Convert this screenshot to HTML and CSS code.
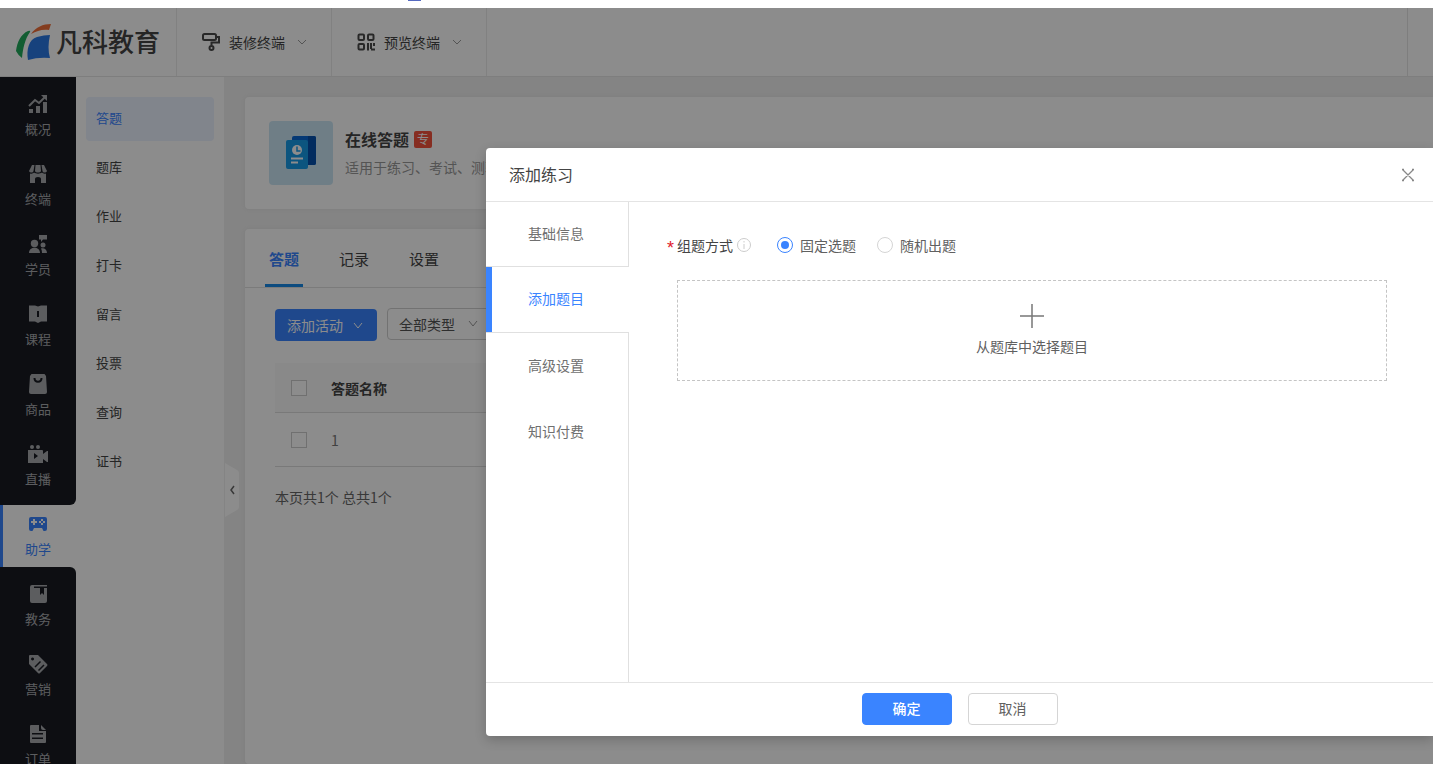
FILE: index.html
```html
<!DOCTYPE html>
<html lang="zh-CN">
<head>
<meta charset="utf-8">
<title>凡科教育</title>
<link rel="stylesheet" href="styles.css">
</head>
<body>
<div class="strip"><span class="strip-mark"></span></div>
<div class="app">
  <header class="topbar">
    <a class="logo" href="#">
      <svg width="36" height="38" viewBox="0 0 36 38" aria-hidden="true">
        <path d="M0 28C1 19 5 11 12 8Q15 7 14 9C9 16 7 25 6 35Q2 32 0 28Z" fill="#22a95b"/>
        <path d="M15 11C20 4 27 1 35 1L33 7C26 6 21 8 15 11Z" fill="#f0703a"/>
        <path d="M12 37C10 27 13 16 21 14Q28 12 34 12Q31 25 34 35Q22 34 12 37Z" fill="#2a78e4"/>
      </svg>
      <span>凡科教育</span>
    </a>
    <button class="top-item" type="button">
      <svg width="18" height="18" viewBox="0 0 18 18" fill="none" stroke="#4a4a4a" stroke-width="2" aria-hidden="true"><rect x="1" y="1" width="13" height="6" rx="1.500"/><path d="M14 4h3v5.500H9.500v3"/><circle cx="9.500" cy="15" r="2"/></svg>
      <span>装修终端</span>
      <svg class="chev" width="10" height="10" viewBox="0 0 10 10" aria-hidden="true"><path d="M1 3l4 4 4-4"/></svg>
    </button>
    <button class="top-item" type="button">
      <svg width="18" height="18" viewBox="0 0 18 18" fill="none" stroke="#4a4a4a" stroke-width="2" aria-hidden="true"><rect x="1.500" y="1.500" width="5.500" height="5.500" rx="1"/><rect x="11" y="1.500" width="5.500" height="5.500" rx="1"/><rect x="1.500" y="11" width="5.500" height="5.500" rx="1"/><path d="M11 10v7.500M14 10v6M17 10v3M14 16.500h4"/></svg>
      <span>预览终端</span>
      <svg class="chev" width="10" height="10" viewBox="0 0 10 10" aria-hidden="true"><path d="M1 3l4 4 4-4"/></svg>
    </button>
    <div class="top-end"></div>
  </header>
  <div class="body">
    <nav class="rail" aria-label="主导航">
      <div class="rail-group rail-first">
        <a class="rail-item" href="#"><svg viewBox="0 0 20 20"><path d="M1 15h4v4H1zM8 12h4v7H8zM15 8h4v11h-4z"/><path d="M1 12l6-6 4 3 6-6" fill="none" stroke="currentColor" stroke-width="2"/><path d="M13 1h6v6z"/></svg>概况</a>
        <a class="rail-item" href="#"><svg viewBox="0 0 20 20"><path d="M4 1h2.500L5.500 7C5 9 2 9 1 7zM7.500 1h5l.5 6c-.5 2-5.500 2-6 0zM13.500 1H16l3 6c-1 2-4 2-4.500 0z"/><path d="M2 9.500c2 .5 3 0 4-1 2 1.500 6 1.500 8 0 1 1 2 1.500 4 1V19h-5v-4q0-2-3-2t-3 2v4H2z"/></svg>终端</a>
        <a class="rail-item" href="#"><svg viewBox="0 0 20 20"><circle cx="6.500" cy="9.500" r="3.700"/><path d="M1 19c0-7 11-7 11 0zM11 1h8v4.500h-4L13 8V5.500h-2z"/><circle cx="15" cy="11" r="2.500"/><path d="M13 14.500c3-1 6 1 6 4.500h-5q0-3-1-4.500z"/></svg>学员</a>
        <a class="rail-item" href="#"><svg viewBox="0 0 20 20"><path fill-rule="evenodd" d="M1 1.500h6l3 1 3-1h6v16h-6l-3 1.500-3-1.500H1zM9 7v6h2V7z"/></svg>课程</a>
        <a class="rail-item" href="#"><svg viewBox="0 0 20 20"><path d="M3.500 0h13L18 2l1 16q0 2-2 2H3q-2 0-2-2L2 2z"/><path d="M6.500 4c0 5 7 5 7 0" fill="none" stroke="#181b22" stroke-width="2"/></svg>商品</a>
        <a class="rail-item" href="#"><svg viewBox="0 0 20 20"><circle cx="4" cy="3" r="2"/><circle cx="10" cy="3" r="2"/><path fill-rule="evenodd" d="M0 6h14q1 0 1 1v3l4-3h1v11h-1l-4-3v4H0zM6 9v6l4-3z"/></svg>直播</a>
      </div>
      <a class="rail-item active" href="#"><svg viewBox="0 0 20 20"><path fill-rule="evenodd" d="M3 3h14q2 0 2 2v10q0 2-2 2h-1q-1 0-1-1l-1-2H6l-1 2q0 1-1 1H3q-2 0-2-2V5q0-2 2-2zM5 5v2H3v2h2v2h2V9h2V7H7V5zM13 5v2h2V5zM13 9v2h2V9zM11 7v2h2V7zM15 7v2h2V7z"/></svg>助学</a>
      <div class="rail-group rail-last">
        <a class="rail-item" href="#"><svg viewBox="0 0 20 20"><path fill-rule="evenodd" d="M4 1h15v1.500H6V4h6v7l2-2 2 2V4h3v13q0 2-2 2H4q-2 0-2-2V3q0-2 2-2z"/></svg>教务</a>
        <a class="rail-item" href="#"><svg viewBox="0 0 20 20"><path fill-rule="evenodd" d="M2 1h8l9 9q1 1 0 2l-7 7q-1 1-2 0l-9-9V2q0-1 1-1zM4.500 3.500a1.500 1.500 0 1 0 .1 0z"/><path d="M7 13l5.500-5.500M10.500 16.500l5.500-5.500" stroke="#181b22" stroke-width="1.500"/></svg>营销</a>
        <a class="rail-item" href="#"><svg viewBox="0 0 20 20"><path fill-rule="evenodd" d="M3 1h8v6h7v11q0 1-1 1H3q-1 0-1-1V2q0-1 1-1zM4 9v1.500h11V9zM4 13.500V15h11v-1.500z"/><path d="M13 1l5 5h-3q-2 0-2-2z"/></svg>订单</a>
      </div>
    </nav>
    <nav class="submenu" aria-label="助学">
      <a class="sub-item active" href="#">答题</a>
      <a class="sub-item" href="#">题库</a>
      <a class="sub-item" href="#">作业</a>
      <a class="sub-item" href="#">打卡</a>
      <a class="sub-item" href="#">留言</a>
      <a class="sub-item" href="#">投票</a>
      <a class="sub-item" href="#">查询</a>
      <a class="sub-item" href="#">证书</a>
      <button class="collapse" type="button" aria-label="收起菜单"><svg width="14" height="54" viewBox="0 0 14 54"><path d="M0 0l12 7q2 1 2 3v34q0 2-2 3L0 54z" fill="#fff"/><path d="M9 23l-3 4 3 4" fill="none" stroke="#666" stroke-width="1.500"/></svg></button>
    </nav>
    <main class="content">
      <section class="card intro">
        <div class="intro-icon">
          <svg width="32" height="34" viewBox="0 0 32 34" aria-hidden="true"><rect x="7" y="0" width="24" height="29" rx="2" fill="#0868d6"/><path d="M23 0h6q2 0 2 2v25q0 2-2 2h-6z" fill="#0550ae"/><rect x="1" y="4" width="22" height="29" rx="2" fill="#169be8"/><circle cx="12" cy="14" r="5" fill="#fff"/><path d="M12 10.500V15h3.500" fill="none" stroke="#169be8" stroke-width="1.500"/><path d="M6 22.500h12M6 26.500h7" stroke="#fff" stroke-width="2"/></svg>
        </div>
        <div class="intro-text">
          <h1>在线答题<span class="badge">专</span></h1>
          <p>适用于练习、考试、测验</p>
        </div>
      </section>
      <section class="card list">
        <nav class="tabs" aria-label="答题管理">
          <a class="tab active" href="#">答题</a>
          <a class="tab" href="#">记录</a>
          <a class="tab" href="#">设置</a>
        </nav>
        <div class="panel">
          <div class="tools">
            <button class="add" type="button">添加活动<svg class="chev" width="10" height="10" viewBox="0 0 10 10" aria-hidden="true"><path d="M1 3l4 5 4-5"/></svg></button>
            <div class="select-wrap">
              <select aria-label="类型"><option>全部类型</option></select>
              <svg class="chev" width="10" height="10" viewBox="0 0 10 10" aria-hidden="true"><path d="M1 2l4 5 4-5"/></svg>
            </div>
          </div>
          <table>
            <thead><tr><th class="pick"><input type="checkbox" aria-label="全选"></th><th>答题名称</th></tr></thead>
            <tbody><tr><td class="pick"><input type="checkbox" aria-label="选择 1"></td><td>1</td></tr></tbody>
          </table>
          <p class="count">本页共1个 总共1个</p>
        </div>
      </section>
    </main>
  </div>
  <div class="overlay">
    <section class="dialog" role="dialog" aria-modal="true" aria-labelledby="dlg-title">
      <header class="dlg-head">
        <h2 id="dlg-title">添加练习</h2>
        <button class="close" type="button" aria-label="关闭"><svg width="14" height="14" viewBox="0 0 14 14"><path d="M1.500 1.500l11 11M12.500 1.500l-11 11M1 1.500h2M11 1.500h2M1 12.500h2M11 12.500h2"/></svg></button>
      </header>
      <div class="dlg-main">
        <nav class="steps" aria-label="步骤">
          <a class="step" href="#">基础信息</a>
          <a class="step active" href="#">添加题目</a>
          <a class="step" href="#">高级设置</a>
          <a class="step" href="#">知识付费</a>
          <div class="steps-rest"></div>
        </nav>
        <form class="form">
          <div class="row" role="radiogroup" aria-labelledby="mode-label">
            <span class="star">*</span>
            <span class="label" id="mode-label">组题方式</span>
            <svg class="info" width="14" height="14" viewBox="0 0 14 14" aria-hidden="true"><circle cx="7" cy="7" r="6.500"/><path d="M7 3v1.500M7 6v5"/></svg>
            <label class="radio"><input type="radio" name="mode" checked>固定选题</label>
            <label class="radio"><input type="radio" name="mode">随机出题</label>
          </div>
          <button class="drop" type="button">
            <svg width="24" height="24" viewBox="0 0 24 24" aria-hidden="true"><path d="M0 12h24M12 0v24"/></svg>
            <span>从题库中选择题目</span>
          </button>
        </form>
      </div>
      <footer class="dlg-foot">
        <button class="btn primary" type="button">确定</button>
        <button class="btn" type="button">取消</button>
      </footer>
    </section>
  </div>
</div>
</body>
</html>
```

FILE: styles.css
```css
* { box-sizing: border-box; }
body {
  margin: 0;
  height: 100vh;
  overflow: hidden;
  display: flex;
  flex-direction: column;
  font: 14px/20px "Noto Sans CJK SC", sans-serif;
  color: #444;
  background: #fff;
}
a { color: inherit; text-decoration: none; }
button { font: inherit; color: inherit; border: 0; background: none; padding: 0; }
h1, h2, p { margin: 0; }
svg { display: block; flex: none; }
.chev { fill: none; stroke: #999; stroke-width: 1; }

.strip { height: 8px; flex: none; padding-left: 408px; }
.strip-mark { display: block; width: 13px; height: 1px; background: #5569c0; }

.app { position: relative; flex: 1; min-height: 0; display: flex; flex-direction: column; }

.topbar { height: 69px; flex: none; display: flex; border-bottom: 1px solid #e6e6e6; }
.logo {
  width: 177px;
  padding-left: 16px;
  display: flex;
  align-items: center;
  gap: 4px;
  border-right: 1px solid #ececec;
  font-size: 26px;
  font-weight: 500;
  line-height: 36px;
  color: #444;
}
.logo span { padding-bottom: 2px; }
.top-item {
  width: 155px;
  padding-left: 25px;
  display: flex;
  align-items: center;
  gap: 9px;
  border-right: 1px solid #ececec;
}
.top-item .chev { margin-left: 3px; }
.top-end { width: 26px; margin-left: auto; border-left: 1px solid #e6e6e6; }

.body { flex: 1; min-height: 0; display: flex; background: #f0f0f0; }

.rail { width: 76px; flex: none; display: flex; flex-direction: column; background: #fff; overflow: hidden; }
.rail-group { background: #181b22; padding: 8px 0; display: flex; flex-direction: column; gap: 8px; flex: none; }
.rail-first { border-radius: 0 0 6px 0; }
.rail-last { border-radius: 0 6px 0 0; }
.rail-item {
  height: 62px;
  flex: none;
  padding-top: 9px;
  display: flex;
  flex-direction: column;
  align-items: center;
  gap: 5px;
  font-size: 13px;
  color: #a8aaae;
}
.rail-item svg { width: 20px; height: 20px; fill: currentColor; }
.rail-item.active { color: #3a84ff; border-left: 3px solid #3a84ff; padding-right: 3px; }

.submenu {
  position: relative;
  width: 149px;
  flex: none;
  padding: 20px 10px 0;
  display: flex;
  flex-direction: column;
  gap: 5px;
  background: #fff;
  border-right: 1px solid #f0f0f0;
}
.sub-item { height: 44px; padding: 11px 10px; border-radius: 4px; font-size: 13px; }
.sub-item.active { background: #ebf2ff; color: #3a84ff; }
.collapse { position: absolute; left: 149px; top: 386px; }

.content { flex: 1; min-width: 0; padding: 20px 0 0 20px; display: flex; flex-direction: column; gap: 20px; }
.card { background: #fff; border-radius: 4px 0 0 4px; box-shadow: 0 0 4px #e4e4e4; }
.intro { padding: 24px; display: flex; gap: 12px; }
.intro-icon { width: 64px; height: 64px; border-radius: 4px; background: #cbe6f5; display: grid; place-items: center; }
.intro-text { display: flex; flex-direction: column; gap: 7px; padding-top: 7px; }
.intro h1 { display: flex; align-items: center; gap: 5px; font-size: 16px; line-height: 22px; font-weight: 600; }
.badge { width: 18px; height: 17px; border-radius: 2px; background: #f5523c; color: #fff; font-size: 12px; line-height: 16px; font-weight: 400; text-align: center; }
.intro p { color: #999; }

.list { flex: 1; }
.tabs { height: 59px; padding-left: 20px; display: flex; gap: 32px; border-bottom: 1px solid #e0e0e0; }
.tab { padding: 20px 4px 0; font-size: 15px; }
.tab.active { color: #3a84ff; font-weight: 700; border-bottom: 3px solid #1789e8; }
.panel { padding: 20px 0 0 30px; }
.tools { display: flex; align-items: flex-end; gap: 10px; height: 33px; }
.add { width: 102px; height: 32px; padding-left: 12px; border-radius: 4px; background: #3a84ff; color: #fff; display: flex; align-items: center; gap: 10px; }
.add .chev { stroke: #fff; }
.select-wrap { position: relative; align-self: flex-start; width: 120px; }
.select-wrap select {
  appearance: none;
  width: 100%;
  height: 32px;
  padding: 0 11px;
  border: 1px solid #d0d0d0;
  border-radius: 4px;
  background: #fff;
  font: inherit;
  color: #555;
}
.select-wrap .chev { position: absolute; left: 81px; top: 11px; }
table { width: 100%; margin-top: 22px; border-collapse: separate; border-spacing: 0; text-align: left; }
th, td { padding: 0; border-bottom: 1px solid #ddd; }
th { height: 50px; background: #fafafa; font-weight: 700; }
td { height: 54px; color: #777; }
.pick { width: 56px; padding-left: 16px; }
.pick input { appearance: none; display: block; width: 16px; height: 16px; margin: 0; border: 1px solid #ccc; background: #fff; }
.count { margin-top: 20px; color: #666; }

.overlay { position: absolute; inset: 0; padding: 140px 0 28px 486px; background: rgba(0, 0, 0, 0.45); }
.dialog { height: 100%; display: flex; flex-direction: column; background: #fff; border-radius: 4px 0 0 4px; box-shadow: 0 4px 12px rgba(0, 0, 0, 0.2); overflow: hidden; }
.dlg-head { height: 54px; flex: none; padding: 0 18px 0 23px; display: flex; align-items: center; justify-content: space-between; border-bottom: 1px solid #e4e4e4; }
.dlg-head h2 { padding-bottom: 2px; font-size: 16px; font-weight: 400; line-height: 24px; }
.close svg { fill: none; stroke: #888; stroke-width: 1.3; }
.dlg-main { flex: 1; min-height: 0; display: flex; }
.steps { width: 143px; flex: none; display: flex; flex-direction: column; color: #707070; }
.step { height: 66px; flex: none; display: flex; align-items: center; padding: 0 0 2px 42px; border-right: 1px solid #e0e0e0; }
.step:first-child { height: 64px; }
.step.active { height: 67px; padding: 0; color: #3a84ff; border: solid #e0e0e0; border-width: 1px 0; line-height: 62px; align-items: flex-start; }
.step.active::before { content: ""; width: 6px; height: 65px; background: #3a84ff; margin-right: 36px; }
.steps-rest { flex: 1; border-right: 1px solid #e0e0e0; }
.form { flex: 1; min-width: 0; padding: 32px 46px 0 38px; }
.row { display: flex; align-items: center; line-height: 20px; }
.star { width: 10px; padding-top: 7px; color: #e0202c; font-family: "Liberation Sans", sans-serif; font-size: 18px; line-height: 15px; }
.info { margin: 0 26px 0 4px; fill: none; stroke: #ccc; }
.radio { display: flex; align-items: center; gap: 7px; margin-right: 21px; color: #606060; }
.radio input { appearance: none; width: 16px; height: 16px; margin: 0; border: 1px solid #d5d5d5; border-radius: 50%; display: grid; place-items: center; }
.radio input:checked { border-color: #3a84ff; }
.radio input:checked::before { content: ""; width: 8px; height: 8px; border-radius: 50%; background: #3a84ff; }
.drop {
  width: calc(100% - 10px);
  height: 101px;
  margin: 24px 0 0 10px;
  padding-bottom: 1px;
  display: flex;
  flex-direction: column;
  align-items: center;
  justify-content: center;
  gap: 8px;
  border: 1px dashed #c4c4c4;
  color: #606060;
}
.drop svg { fill: none; stroke: #777; stroke-width: 1.5; }
.dlg-foot { height: 54px; flex: none; padding-bottom: 2px; display: flex; align-items: center; justify-content: center; gap: 16px; border-top: 1px solid #e4e4e4; }
.btn { width: 90px; height: 32px; padding-bottom: 1px; border: 1px solid #d5d5d5; border-radius: 4px; background: #fff; color: #606060; }
.primary { background: #3a84ff; border-color: #3a84ff; color: #fff; font-weight: 500; }
```
